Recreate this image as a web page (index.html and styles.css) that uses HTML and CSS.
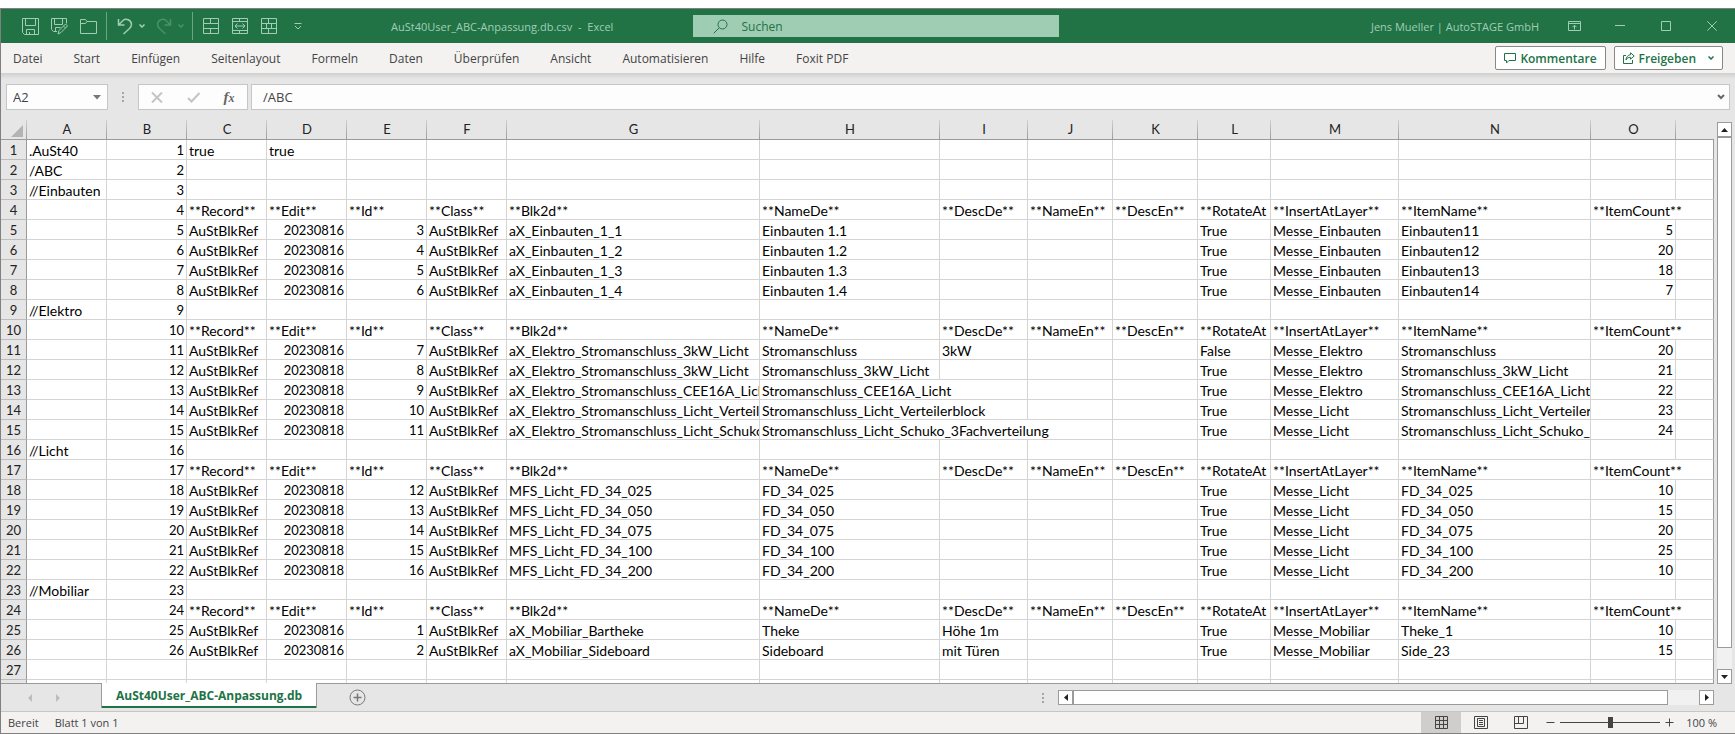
FILE: index.html
```html
<!DOCTYPE html>
<html lang="de">
<head>
    <meta charset="UTF-8">
    <meta name="viewport" content="width=device-width, initial-scale=1.0">
    <title>AuSt40User_ABC-Anpassung.db.csv - Excel</title>
    <link rel="stylesheet" href="styles.css">
</head>
<body>

<div class="window">

    <header class="titlebar">
        <div class="titlebar-left">
            <div class="quick-access">
                <button class="qa-btn" aria-label="Speichern">
                    <svg width="17" height="17" viewBox="0 0 17 17"><path d="M.5.5h16v16H2.500l-2-2zM3.500.5v7h10v-7M4.500 16.500v-5h8v5M7.500 16v-2"/></svg>
                </button>
                <button class="qa-btn" aria-label="Speichern unter">
                    <svg width="17" height="17" viewBox="0 0 17 17"><path d="M6 13.500H2.500l-2-2V.5h15v5M3.500.5v6h8v-6M4.500 13.500v-4h5M7 16l1-3.500 6.500-6.500 2 2L10 14.500zM12.500 8l2 2"/></svg>
                </button>
                <button class="qa-btn" aria-label="Öffnen">
                    <svg width="17" height="17" viewBox="0 0 17 17"><path d="M.5 15.500v-14h5l1.500 2h9.500v12zM.5 5.500h5L7 3.500"/></svg>
                </button>
                <span class="qa-divider"></span>
                <button class="qa-btn qa-undo" aria-label="Rückgängig">
                    <svg width="16" height="17" viewBox="0 0 16 17"><path class="thick" d="M1.500 1v6h6M1.500 7L6 2.500c3-2.500 8-.5 8.500 3.500 0 2-1 3.500-2 4.500L6.500 16"/></svg>
                </button>
                <button class="qa-chevron" aria-label="Rückgängig-Liste">
                    <svg width="6" height="4" viewBox="0 0 6 4"><path class="thick" d="M.5.5L3 3 5.500.5"/></svg>
                </button>
                <button class="qa-btn qa-undo" aria-label="Wiederholen" disabled>
                    <svg width="16" height="17" viewBox="0 0 16 17"><path class="thick" d="M14.500 1v6h-6M14.500 7L10 2.500C7 0 2 2 1.500 6c0 2 1 3.500 2 4.500L9.500 16"/></svg>
                </button>
                <button class="qa-chevron" aria-label="Wiederholen-Liste" disabled>
                    <svg width="6" height="4" viewBox="0 0 6 4"><path class="thick" d="M.5.5L3 3 5.500.5"/></svg>
                </button>
                <span class="qa-divider qa-divider-wide"></span>
                <button class="qa-btn" aria-label="Zellen verbinden">
                    <svg width="16" height="16" viewBox="0 0 16 16"><path d="M.5.5h15v15H.5zM.5 5.500h15M.5 10.500h15M7.500.5v5M7.500 10.500v5"/></svg>
                </button>
                <button class="qa-btn" aria-label="Verbinden und zentrieren">
                    <svg width="16" height="16" viewBox="0 0 16 16"><path d="M.5.5h15v15H.5zM.5 3.500h15M.5 12.500h15M7.500.5v3M7.500 12.500v3M3 8h10M5.500 5.500L3 8l2.500 2.500M10.500 5.500L13 8l-2.500 2.500"/></svg>
                </button>
                <button class="qa-btn" aria-label="Verbund aufheben">
                    <svg width="16" height="16" viewBox="0 0 16 16"><path d="M.5.5h15v15H.5zM.5 5.500h15M.5 10.500h15M7.500.5v5M5.500 5.500v5M10.500 5.500v5M7.500 10.500v5"/></svg>
                </button>
                <button class="qa-btn" aria-label="Symbolleiste anpassen">
                    <svg width="8" height="7" viewBox="0 0 8 7"><path d="M.5.5h7M1 3l3 3 3-3"/></svg>
                </button>
            </div>
            <h1 class="doc-title">AuSt40User_ABC-Anpassung.db.csv&nbsp; -&nbsp; Excel</h1>
        </div>

        <label class="search">
            <svg width="15" height="15" viewBox="0 0 15 15"><circle cx="9.500" cy="5.500" r="4.500"/><path d="M6 9L.7 14.300"/></svg>
            <input type="search" placeholder="Suchen" aria-label="Suchen">
        </label>

        <div class="titlebar-right">
            <span class="user">Jens Mueller | AutoSTAGE GmbH</span>
            <button class="win-btn" aria-label="Menüband-Anzeigeoptionen">
                <svg width="13" height="10" viewBox="0 0 13 10"><path d="M.5.5h12v9H.5zM.5 2.500h12M6.500 8.500v-4M4.500 6.200l2-2 2 2"/></svg>
            </button>
            <button class="win-btn" aria-label="Minimieren">
                <svg width="10" height="10" viewBox="0 0 10 10"><path d="M0 4.500h10"/></svg>
            </button>
            <button class="win-btn" aria-label="Maximieren">
                <svg width="10" height="10" viewBox="0 0 10 10"><path d="M.5.5h9v9h-9z"/></svg>
            </button>
            <button class="win-btn" aria-label="Schließen">
                <svg width="10" height="10" viewBox="0 0 10 10"><path d="M.3.3l9.400 9.400M9.700.3L.3 9.700"/></svg>
            </button>
        </div>
    </header>

    <nav class="ribbon">
        <a href="#">Datei</a>
        <a href="#">Start</a>
        <a href="#">Einfügen</a>
        <a href="#">Seitenlayout</a>
        <a href="#">Formeln</a>
        <a href="#">Daten</a>
        <a href="#">Überprüfen</a>
        <a href="#">Ansicht</a>
        <a href="#">Automatisieren</a>
        <a href="#">Hilfe</a>
        <a href="#">Foxit PDF</a>
        <div class="ribbon-actions">
            <button class="action-btn">
                <svg width="12" height="11" viewBox="0 0 12 11"><path d="M.5.5h11v7H5L2.500 10V7.500h-2z"/></svg>
                Kommentare
            </button>
            <button class="action-btn">
                <svg width="12" height="12" viewBox="0 0 12 12"><path d="M3 3.500H.5v8h9V8M7.500.8l3.700 3.200-3.700 3.200V5.300C5.500 5.300 4 6 3 8c.2-3 2-5 4.500-5.300z"/></svg>
                Freigeben
                <svg class="action-chevron" width="6" height="4" viewBox="0 0 6 4"><path class="thick" d="M.5.5L3 3 5.500.5"/></svg>
            </button>
        </div>
    </nav>

    <div class="formula-bar">
        <div class="name-box">
            <input type="text" value="A2" aria-label="Namenfeld">
            <svg width="8" height="5" viewBox="0 0 8 5"><path d="M0 0h8L4 4.500z"/></svg>
        </div>
        <svg class="dots" width="2" height="10" viewBox="0 0 2 10"><path d="M0 0h2v2H0zM0 4h2v2H0zM0 8h2v2H0z"/></svg>
        <div class="formula-buttons">
            <button aria-label="Abbrechen">
                <svg width="12" height="11" viewBox="0 0 12 11"><path d="M1 .5l10 10M11 .5l-10 10"/></svg>
            </button>
            <button aria-label="Eingeben">
                <svg width="13" height="11" viewBox="0 0 13 11"><path d="M1 6l3.500 3.500L12.500 1"/></svg>
            </button>
            <button class="fx" aria-label="Funktion einfügen">f<span>x</span></button>
        </div>
        <div class="formula-input">
            <input type="text" value="/ABC" aria-label="Bearbeitungsleiste">
            <svg width="8" height="6" viewBox="0 0 8 6"><path d="M1 1l3 3 3-3"/></svg>
        </div>
    </div>

    <main class="sheet">
        <div class="grid">
            <table>
                <colgroup>
                    <col class="w-head">
                    <col class="w-80"><col class="w-80"><col class="w-80">
                    <col class="w-80"><col class="w-80"><col class="w-80">
                    <col class="w-blk"><col class="w-name"><col class="w-desc">
                    <col class="w-85"><col class="w-85"><col class="w-rotate">
                    <col class="w-layer"><col class="w-item"><col class="w-85">
                    <col>
                </colgroup>
                <thead>
                    <tr>
                        <th class="corner"><svg width="12" height="12" viewBox="0 0 12 12"><path d="M12 0v12H0z"/></svg></th>
                        <th>A</th><th>B</th><th>C</th><th>D</th><th>E</th><th>F</th><th>G</th><th>H</th>
                        <th>I</th><th>J</th><th>K</th><th>L</th><th>M</th><th>N</th><th>O</th><th class="last"></th>
                    </tr>
                </thead>
                <tbody id="rows"></tbody>
            </table>
        </div>
        <div class="scroll-v">
            <button aria-label="Nach oben"><svg width="7" height="4" viewBox="0 0 7 4"><path d="M0 4h7L3.500 0z"/></svg></button>
            <div class="track"><div class="thumb"></div></div>
            <button aria-label="Nach unten"><svg width="7" height="4" viewBox="0 0 7 4"><path d="M0 0h7L3.500 4z"/></svg></button>
        </div>
    </main>

    <div class="tabs">
        <div class="tab-nav">
            <button aria-label="Vorheriges Blatt" disabled><svg width="4" height="8" viewBox="0 0 4 8"><path d="M4 0v8L0 4z"/></svg></button>
            <button aria-label="Nächstes Blatt" disabled><svg width="4" height="8" viewBox="0 0 4 8"><path d="M0 0v8l4-4z"/></svg></button>
        </div>
        <button class="tab">AuSt40User_ABC-Anpassung.db</button>
        <button class="tab-add" aria-label="Neues Blatt">
            <svg width="17" height="17" viewBox="0 0 17 17"><circle cx="8.500" cy="8.500" r="7.500"/><path class="thick" d="M8.500 4.500v8M4.500 8.500h8"/></svg>
        </button>
        <svg class="dots tab-dots" width="2" height="10" viewBox="0 0 2 10"><path d="M0 0h2v2H0zM0 4h2v2H0zM0 8h2v2H0z"/></svg>
        <div class="scroll-h">
            <button aria-label="Nach links"><svg width="4" height="7" viewBox="0 0 4 7"><path d="M4 0v7L0 3.500z"/></svg></button>
            <div class="track"><div class="thumb"></div></div>
            <button aria-label="Nach rechts"><svg width="4" height="7" viewBox="0 0 4 7"><path d="M0 0v7l4-3.500z"/></svg></button>
        </div>
    </div>

    <footer class="status">
        <span>Bereit</span>
        <span>Blatt 1 von 1</span>
        <div class="status-right">
            <button class="view-btn active" aria-label="Normal">
                <svg width="13" height="13" viewBox="0 0 13 13"><path d="M.5.5h12v12H.5zM.5 4.500h12M.5 8.500h12M4.500.5v12M8.500.5v12"/></svg>
            </button>
            <button class="view-btn" aria-label="Seitenlayout">
                <svg width="14" height="13" viewBox="0 0 14 13"><path d="M.5.5h13v12H.5zM3.500 2.500h7v8h-7zM5 4.500h4M5 6.500h4M5 8.500h4"/></svg>
            </button>
            <button class="view-btn" aria-label="Umbruchvorschau">
                <svg width="14" height="13" viewBox="0 0 14 13"><path d="M.5.5h13v12H.5zM4.500.5v7M9.500.5v7M.5 7.500h9"/></svg>
            </button>
            <button class="zoom-btn" aria-label="Verkleinern"><svg width="9" height="9" viewBox="0 0 9 9"><path d="M.5 4.500h8"/></svg></button>
            <input class="zoom" type="range" min="0" max="100" value="50" aria-label="Zoom">
            <button class="zoom-btn" aria-label="Vergrößern"><svg width="9" height="9" viewBox="0 0 9 9"><path d="M.5 4.500h8M4.500.5v8"/></svg></button>
            <span class="zoom-value">100 %</span>
        </div>
    </footer>
</div>

<script>
    const COLS = 16;
    const heads = ['', null, '**Record**', '**Edit**', '**Id**', '**Class**', '**Blk2d**', '**NameDe**', '**DescDe**',
        '**NameEn**', '**DescEn**', '**RotateAt', '**InsertAtLayer**', '**ItemName**', '**ItemCount**'];

    // one record: edit, id, blk2d, nameDe, descDe, rotate, layer, item, count
    function record(edit, id, blk, name, desc, rotate, layer, item, count) {
        return ['', null, 'AuStBlkRef', edit, id, 'AuStBlkRef', blk, name, desc, '', '', rotate, layer, item, count];
    }

    const sheet = [
        ['.AuSt40', null, 'true', 'true'],
        ['/ABC'],
        ['//Einbauten'],
        heads,
        record(20230816, 3, 'aX_Einbauten_1_1', 'Einbauten 1.1', '', 'True', 'Messe_Einbauten', 'Einbauten11', 5),
        record(20230816, 4, 'aX_Einbauten_1_2', 'Einbauten 1.2', '', 'True', 'Messe_Einbauten', 'Einbauten12', 20),
        record(20230816, 5, 'aX_Einbauten_1_3', 'Einbauten 1.3', '', 'True', 'Messe_Einbauten', 'Einbauten13', 18),
        record(20230816, 6, 'aX_Einbauten_1_4', 'Einbauten 1.4', '', 'True', 'Messe_Einbauten', 'Einbauten14', 7),
        ['//Elektro'],
        heads,
        record(20230816, 7, 'aX_Elektro_Stromanschluss_3kW_Licht', 'Stromanschluss', '3kW', 'False', 'Messe_Elektro', 'Stromanschluss', 20),
        record(20230818, 8, 'aX_Elektro_Stromanschluss_3kW_Licht', 'Stromanschluss_3kW_Licht', '', 'True', 'Messe_Elektro', 'Stromanschluss_3kW_Licht', 21),
        record(20230818, 9, 'aX_Elektro_Stromanschluss_CEE16A_Licht', 'Stromanschluss_CEE16A_Licht', '', 'True', 'Messe_Elektro', 'Stromanschluss_CEE16A_Licht', 22),
        record(20230818, 10, 'aX_Elektro_Stromanschluss_Licht_Verteilerblock', 'Stromanschluss_Licht_Verteilerblock', '', 'True', 'Messe_Licht', 'Stromanschluss_Licht_Verteilerblock', 23),
        record(20230818, 11, 'aX_Elektro_Stromanschluss_Licht_Schuko_3Fachverteilung', 'Stromanschluss_Licht_Schuko_3Fachverteilung', '', 'True', 'Messe_Licht', 'Stromanschluss_Licht_Schuko_3Fachverteilung', 24),
        ['//Licht'],
        heads,
        record(20230818, 12, 'MFS_Licht_FD_34_025', 'FD_34_025', '', 'True', 'Messe_Licht', 'FD_34_025', 10),
        record(20230818, 13, 'MFS_Licht_FD_34_050', 'FD_34_050', '', 'True', 'Messe_Licht', 'FD_34_050', 15),
        record(20230818, 14, 'MFS_Licht_FD_34_075', 'FD_34_075', '', 'True', 'Messe_Licht', 'FD_34_075', 20),
        record(20230818, 15, 'MFS_Licht_FD_34_100', 'FD_34_100', '', 'True', 'Messe_Licht', 'FD_34_100', 25),
        record(20230818, 16, 'MFS_Licht_FD_34_200', 'FD_34_200', '', 'True', 'Messe_Licht', 'FD_34_200', 10),
        ['//Mobiliar'],
        heads,
        record(20230816, 1, 'aX_Mobiliar_Bartheke', 'Theke', 'Höhe 1m', 'True', 'Messe_Mobiliar', 'Theke_1', 10),
        record(20230816, 2, 'aX_Mobiliar_Sideboard', 'Sideboard', 'mit Türen', 'True', 'Messe_Mobiliar', 'Side_23', 15),
        [],
        []
    ];

    // long texts run over the empty cells to their right: row -> { column: cells }
    const spill = { 4: {14: 2}, 10: {14: 2}, 13: {7: 2}, 14: {7: 2}, 15: {7: 3}, 17: {14: 2}, 24: {14: 2} };

    const tbody = document.getElementById('rows');

    sheet.forEach((cells, index) => {
        const number = index + 1;
        const row = document.createElement('tr');
        const head = document.createElement('th');
        head.textContent = number;
        row.appendChild(head);

        for (let c = 0; c < COLS; c++) {
            const td = document.createElement('td');
            // column B counts the filled rows
            const value = c === 1 && cells.length ? number : cells[c];
            if (value !== undefined && value !== null) {
                td.textContent = value;
            }
            if (typeof value === 'number') {
                td.className = 'num';
            }
            const span = spill[number] && spill[number][c];
            if (span) {
                td.colSpan = span;
                c += span - 1;
            }
            row.appendChild(td);
        }
        tbody.appendChild(row);
    });
</script>

</body>
</html>
```
FILE: styles.css
```css
* {
    margin: 0;
    padding: 0;
    box-sizing: border-box;
}

body {
    height: 100vh;
    padding-top: 8px;
    background: #fff;
    font-family: "Open Sans", "Noto Sans", sans-serif;
    font-size: 12px;
    color: #444;
    overflow: hidden;
}

button,
input {
    font: inherit;
    color: inherit;
    border: none;
    background: none;
    outline: none;
}

button {
    display: flex;
    align-items: center;
    justify-content: center;
}

svg {
    display: block;
    flex: none;
    fill: none;
    stroke: currentColor;
}

.window {
    height: 100%;
    display: flex;
    flex-direction: column;
    border: 1px solid #808080;
    border-right: none;
    background: #e6e6e6;
}

/* title bar */
.titlebar {
    flex: none;
    height: 34px;
    display: grid;
    grid-template-columns: 1fr 366px 1fr;
    align-items: center;
    padding-left: 15px;
    background: #217346;
    color: #a0cdb4;
}

.titlebar-left,
.titlebar-right,
.quick-access {
    display: flex;
    align-items: center;
}

.qa-btn {
    width: 29px;
    height: 28px;
}

.qa-undo {
    width: 26px;
}

.qa-chevron {
    width: 8px;
    height: 28px;
    margin-right: 5px;
}

.qa-btn:disabled,
.qa-chevron:disabled {
    color: #4a9069;
}

.thick {
    stroke-width: 1.5;
}

.qa-divider {
    width: 1px;
    height: 28px;
    margin: 0 5px 0 3px;
    background: #6aa585;
}

.qa-divider-wide {
    margin: 0 3px 0 2px;
}

.doc-title {
    flex: 1;
    font-size: 11px;
    font-weight: 400;
    text-align: center;
    white-space: nowrap;
}

.search {
    height: 22px;
    display: flex;
    align-items: center;
    gap: 14px;
    padding: 0 20px;
    background: #9fcdb3;
    color: #217346;
}

.search input {
    flex: 1;
    min-width: 0;
}

.search input::placeholder {
    color: #217346;
    opacity: 1;
}

.titlebar-right {
    justify-content: flex-end;
    white-space: nowrap;
}

.user {
    padding-right: 12px;
    font-size: 11px;
}

.win-btn {
    width: 46px;
    height: 34px;
}

/* ribbon tabs */
.ribbon {
    flex: none;
    height: 30px;
    display: flex;
    align-items: center;
    gap: 31px;
    padding: 0 12px;
    background: #f3f2f1;
}

.ribbon a {
    color: #444;
    text-decoration: none;
    white-space: nowrap;
}

.ribbon-actions {
    display: flex;
    gap: 8px;
    margin-left: auto;
}

.action-btn {
    height: 24px;
    gap: 4px;
    padding: 0 8px;
    border: 1px solid #8a8886;
    border-radius: 2px;
    background: #fff;
    color: #217346;
    font-size: 12px;
    font-weight: 600;
}

.action-chevron {
    margin-left: 8px;
}

/* formula bar */
.formula-bar {
    flex: none;
    display: flex;
    align-items: center;
    padding: 11px 5px 10px;
    background: linear-gradient(#cfcfcf, #e6e6e6 6px);
    font-size: 13px;
}

.name-box,
.formula-buttons,
.formula-input {
    height: 26px;
    display: flex;
    align-items: center;
    border: 1px solid #c6c6c6;
    background: #fdfdfd;
}

.name-box {
    width: 102px;
    padding: 0 6px;
}

.name-box input,
.formula-input input {
    flex: 1;
    min-width: 0;
}

.name-box svg {
    fill: #777;
    stroke: none;
}

.dots {
    margin: 0 14px;
    fill: #a6a6a6;
    stroke: none;
}

.formula-buttons {
    width: 110px;
    justify-content: space-around;
}

.formula-buttons button {
    width: 36px;
    height: 24px;
    color: #c4c4c4;
}

.formula-buttons path {
    stroke-width: 2;
}

.formula-buttons .fx {
    color: #666;
    font-family: "Liberation Serif", serif;
    font-size: 15px;
    font-style: italic;
    font-weight: 700;
}

.fx span {
    padding-top: 3px;
    font-size: 12px;
}

.formula-input {
    flex: 1;
    margin-left: 3px;
    padding: 0 4px 0 11px;
}

.formula-input svg {
    color: #666;
    stroke-width: 2;
}

/* sheet */
.sheet {
    flex: 1;
    min-height: 0;
    display: flex;
}

.grid {
    flex: 1;
    min-width: 0;
    overflow: hidden;
    border-bottom: 1px solid #9b9b9b;
}

table {
    width: 100%;
    table-layout: fixed;
    border-spacing: 0;
    font-family: Lato, sans-serif;
    font-size: 14px;
    line-height: 17px;
    color: #000;
}

.w-head { width: 26px; }
.w-80 { width: 80px; }
.w-85 { width: 85px; }
.w-blk { width: 253px; }
.w-name { width: 180px; }
.w-desc { width: 88px; }
.w-rotate { width: 73px; }
.w-layer { width: 128px; }
.w-item { width: 192px; }

th {
    height: 20px;
    font-size: 13px;
    font-weight: 400;
    color: #222;
    background: #e6e6e6;
}

thead th {
    border-bottom: 1px solid #9b9b9b;
    background: linear-gradient(#d0d0d0, #9b9b9b) right / 1px 100% no-repeat #e6e6e6;
}

thead th.last {
    background: #e6e6e6;
}

tbody th {
    padding-top: 2px;
    border-right: 1px solid #9b9b9b;
    border-bottom: 1px solid #bdbdbd;
}

.corner svg {
    margin: 3px 0 0 10px;
    fill: #b4b4b4;
    stroke: none;
}

td {
    height: 20px;
    padding: 2px 2px 0;
    border-right: 1px solid #d4d4d4;
    border-bottom: 1px solid #d4d4d4;
    background: #fff;
    overflow: hidden;
    white-space: nowrap;
}

td:last-child {
    border-right-color: #9b9b9b;
}

.num {
    font-size: 13px;
    text-align: right;
}

/* scroll bars */
.scroll-v,
.scroll-h {
    flex: none;
    display: flex;
    color: #222;
}

.scroll-v {
    flex-direction: column;
    width: 15px;
    margin: 2px 3px 0;
}

.scroll-v button,
.scroll-h button {
    flex: none;
    width: 15px;
    height: 15px;
    border: 1px solid #9b9b9b;
    background: #fff;
}

.scroll-v button path,
.scroll-h button path {
    fill: #222;
    stroke: none;
}

.track {
    flex: 1;
    background: #f1f1f1;
}

.thumb {
    border: 1px solid #9b9b9b;
    background: #fff;
}

.scroll-v .thumb {
    height: 96%;
}

.scroll-h .thumb {
    width: 95%;
    height: 15px;
}

/* sheet tabs */
.tabs {
    flex: none;
    height: 27px;
    display: flex;
    align-items: center;
    padding-right: 21px;
}

.tab-nav {
    display: flex;
    gap: 12px;
    width: 100px;
    padding-left: 21px;
}

.tab-nav button {
    width: 16px;
    height: 20px;
}

.tab-nav path {
    fill: #bdbdbd;
    stroke: none;
}

.tab {
    align-self: flex-start;
    height: 25px;
    margin-top: -1px;
    padding: 0 14px;
    border: solid #9b9b9b;
    border-width: 0 1px;
    box-shadow: inset 0 -2px #217346;
    background: #fff;
    color: #217346;
    font-weight: 700;
    white-space: nowrap;
}

.tab-add {
    margin-left: 32px;
    color: #777;
}

.tab-dots {
    margin-left: auto;
}

.scroll-h {
    width: 656px;
    max-width: 50%;
}

/* status bar */
.status {
    flex: none;
    height: 22px;
    display: flex;
    align-items: center;
    gap: 16px;
    padding-left: 7px;
    border-top: 1px solid #c6c6c6;
    background: #f3f2f1;
    font-size: 11px;
}

.status-right {
    display: flex;
    align-items: center;
    margin-left: auto;
    padding-right: 18px;
}

.view-btn {
    width: 40px;
    height: 21px;
}

.view-btn.active {
    background: #d0cecd;
}

.zoom-btn {
    width: 19px;
    height: 21px;
}

.zoom {
    width: 100px;
    height: 11px;
    appearance: none;
    background: linear-gradient(#444, #444) center / 100% 1px no-repeat;
}

.zoom::-webkit-slider-thumb {
    appearance: none;
    width: 5px;
    height: 11px;
    background: #444;
}

.zoom-value {
    padding-left: 7px;
}
```
